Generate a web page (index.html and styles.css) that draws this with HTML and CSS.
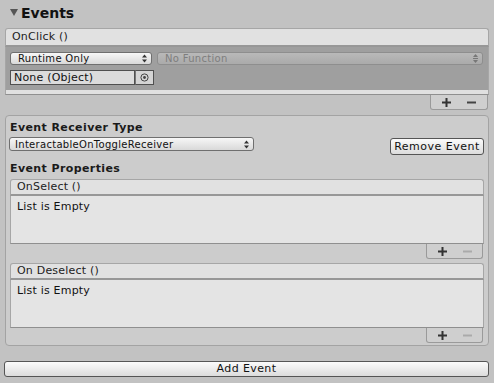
FILE: index.html
```html
<html>
<head>
  <link rel="stylesheet" href="styles.css">
</head>
<body>
  <div class="title">
    <svg class="fold" width="8" height="8" viewBox="0 0 8 8"><path d="M0 1 H8 L4 8 Z" fill="#555"/></svg>
    <span>Events</span>
  </div>

  <!-- OnClick 事件列表 -->
  <div class="click-list">
    <div class="list-head">OnClick ()</div>
    <div class="click-body">
      <div class="row">
        <div class="select runtime">
          <span>Runtime Only</span>
          <svg width="5" height="9" viewBox="0 0 5 9"><path d="M0 3.5 L2.5 0.5 L5 3.5 Z M0 5.5 L2.5 8.5 L5 5.5 Z" fill="#333"/></svg>
        </div>
        <div class="select disabled">
          <span>No Function</span>
          <svg width="5" height="9" viewBox="0 0 5 9"><path d="M0 3 L2.5 0 L5 3 Z M0 4 H5 V5 H0 Z M0 6 L2.5 9 L5 6 Z" fill="#777"/></svg>
        </div>
      </div>
      <div class="row">
        <div class="object-field">None (Object)</div>
        <div class="picker">
          <svg width="9" height="9" viewBox="0 0 9 9"><circle cx="4.5" cy="4.5" r="3.6" fill="none" stroke="#444" stroke-width="1"/><circle cx="4.5" cy="4.5" r="1.4" fill="#444"/></svg>
        </div>
      </div>
    </div>
    <div class="click-strip"></div>
    <div class="tab-row">
      <div class="tab">
        <svg width="9" height="9" viewBox="0 0 9 9"><path d="M0 3.5 H9 V5.5 H0 Z M3.5 0 H5.5 V9 H3.5 Z" fill="#333"/></svg>
        <svg width="9" height="9" viewBox="0 0 9 9"><path d="M0 3.5 H9 V5.5 H0 Z" fill="#444"/></svg>
      </div>
    </div>
  </div>

  <!-- 事件接收器面板 -->
  <div class="panel">
    <div class="label">Event Receiver Type</div>
    <div class="receiver-row">
      <div class="select receiver">
        <span>InteractableOnToggleReceiver</span>
        <svg width="5" height="9" viewBox="0 0 5 9"><path d="M0 3.5 L2.5 0.5 L5 3.5 Z M0 5.5 L2.5 8.5 L5 5.5 Z" fill="#333"/></svg>
      </div>
      <div class="button remove">Remove Event</div>
    </div>
    <div class="label props">Event Properties</div>

    <div class="list">
      <div class="list-head">OnSelect ()</div>
      <div class="list-body">List is Empty</div>
      <div class="tab-row">
        <div class="tab">
          <svg width="9" height="9" viewBox="0 0 9 9"><path d="M0 3.5 H9 V5.5 H0 Z M3.5 0 H5.5 V9 H3.5 Z" fill="#333"/></svg>
          <svg width="9" height="9" viewBox="0 0 9 9"><path d="M0 3.5 H9 V5.5 H0 Z" fill="#aaa"/></svg>
        </div>
      </div>
    </div>

    <div class="list">
      <div class="list-head">On Deselect ()</div>
      <div class="list-body">List is Empty</div>
      <div class="tab-row">
        <div class="tab">
          <svg width="9" height="9" viewBox="0 0 9 9"><path d="M0 3.5 H9 V5.5 H0 Z M3.5 0 H5.5 V9 H3.5 Z" fill="#333"/></svg>
          <svg width="9" height="9" viewBox="0 0 9 9"><path d="M0 3.5 H9 V5.5 H0 Z" fill="#aaa"/></svg>
        </div>
      </div>
    </div>
  </div>

  <div class="button add">Add Event</div>
</body>
</html>
```

FILE: styles.css
```css
/* 全局 */
body {
  margin: 0;
  padding: 0 5px 0 5px;
  background-color: #c2c2c2;
  font-family: "DejaVu Sans", Verdana, sans-serif;
  font-size: 11px;
  color: #111;
}

/* 标题 */
.title {
  height: 28px;
  display: flex;
  align-items: center;
  padding-left: 5px;
  box-sizing: border-box;
  padding-bottom: 3px;
}

.title .fold {
  margin-right: 3px;
  margin-top: -2px;
}

.title span {
  font-size: 14px;
  font-weight: bold;
  color: #111;
}

/* 列表头 */
.list-head {
  height: 16px;
  line-height: 16px;
  padding-left: 6px;
  background-color: #e1e1e1;
  border: 1px solid #a6a6a6;
  border-bottom: 2px solid #979797;
  border-radius: 3px 3px 0 0;
  color: #222;
  letter-spacing: 0.2px;
}

/* OnClick 列表 */
.click-body {
  background-color: #9f9f9f;
  border-left: 1px solid #a6a6a6;
  border-right: 1px solid #a6a6a6;
  padding: 5px 5px 5px 4px;
  display: flex;
  flex-direction: column;
  gap: 5px;
}

.click-strip {
  height: 4px;
  background-color: #e0e0e0;
  border: 1px solid #a6a6a6;
  border-top: none;
  border-bottom: 1px solid #8f8f8f;
}

.row {
  display: flex;
  gap: 5px;
}

/* 下拉框 */
.select {
  height: 11px;
  padding: 0 4px 0 7px;
  display: flex;
  align-items: center;
  justify-content: space-between;
  border: 1px solid #6f6f6f;
  border-radius: 3px;
  background: linear-gradient(#f7f7f7, #d9d9d9);
  font-size: 10px;
  color: #111;
  letter-spacing: 0.3px;
}

.select.runtime {
  width: 129px;
}

.select.disabled {
  flex: 1;
  border-color: #8e8e8e;
  background: linear-gradient(#b9b9b9, #aaaaaa);
  color: #7e7e7e;
}

.object-field {
  width: 120px;
  height: 13px;
  line-height: 13px;
  padding-left: 3px;
  background-color: #dcdcdc;
  border: 1px solid #505050;
  font-size: 11px;
  letter-spacing: 0.2px;
}

.row .picker {
  margin-left: -5px;
  width: 17px;
  height: 13px;
  border: 1px solid #505050;
  border-left: 1px solid #777;
  background-color: #d4d4d4;
  display: flex;
  align-items: center;
  justify-content: center;
}

/* 加减按钮标签 */
.tab-row {
  display: flex;
  justify-content: flex-end;
}

.tab {
  width: 45px;
  height: 14px;
  margin-right: 1px;
  padding-left: 11px;
  background-color: #cfcfcf;
  border: 1px solid #9a9a9a;
  border-top: none;
  border-radius: 0 0 3px 3px;
  display: flex;
  align-items: center;
  gap: 16px;
}

/* 面板 */
.panel {
  margin-top: 5px;
  background-color: #cccccc;
  border: 1px solid #a3a3a3;
  border-radius: 4px;
  padding: 4px 4px 2px 4px;
}

.label {
  font-weight: bold;
  height: 16px;
  line-height: 16px;
  letter-spacing: 0.4px;
  color: #1a1a1a;
}

.props {
  margin-top: 6px;
  margin-bottom: 2px;
}

.receiver-row {
  display: flex;
  justify-content: space-between;
  align-items: flex-start;
  margin-top: 1px;
}

.select.receiver {
  width: 234px;
  height: 12px;
  margin-left: -1px;
  padding-left: 5px;
}

/* 按钮 */
.button {
  border: 1px solid #555;
  border-radius: 3px;
  background: linear-gradient(#fbfbfb, #dcdcdc);
  text-align: center;
  color: #111;
}

.button.remove {
  width: 92px;
  height: 15px;
  line-height: 15px;
  margin-top: 1px;
  letter-spacing: 0.5px;
}

.button.add {
  margin: 15px 0 0 -1px;
  height: 14px;
  line-height: 14px;
  letter-spacing: 0.4px;
}

/* 事件列表 */
.list {
  margin-bottom: 4px;
}

.list:last-child {
  margin-bottom: 0;
}

.list .list-head {
  height: 14px;
  line-height: 14px;
}

.list-body {
  height: 48px;
  padding: 4px 6px;
  box-sizing: border-box;
  background-color: #e4e4e4;
  border: 1px solid #a6a6a6;
  border-top: none;
  border-bottom: 1px solid #8f8f8f;
  letter-spacing: 0.2px;
}

.list .tab {
  width: 44px;
}
```
